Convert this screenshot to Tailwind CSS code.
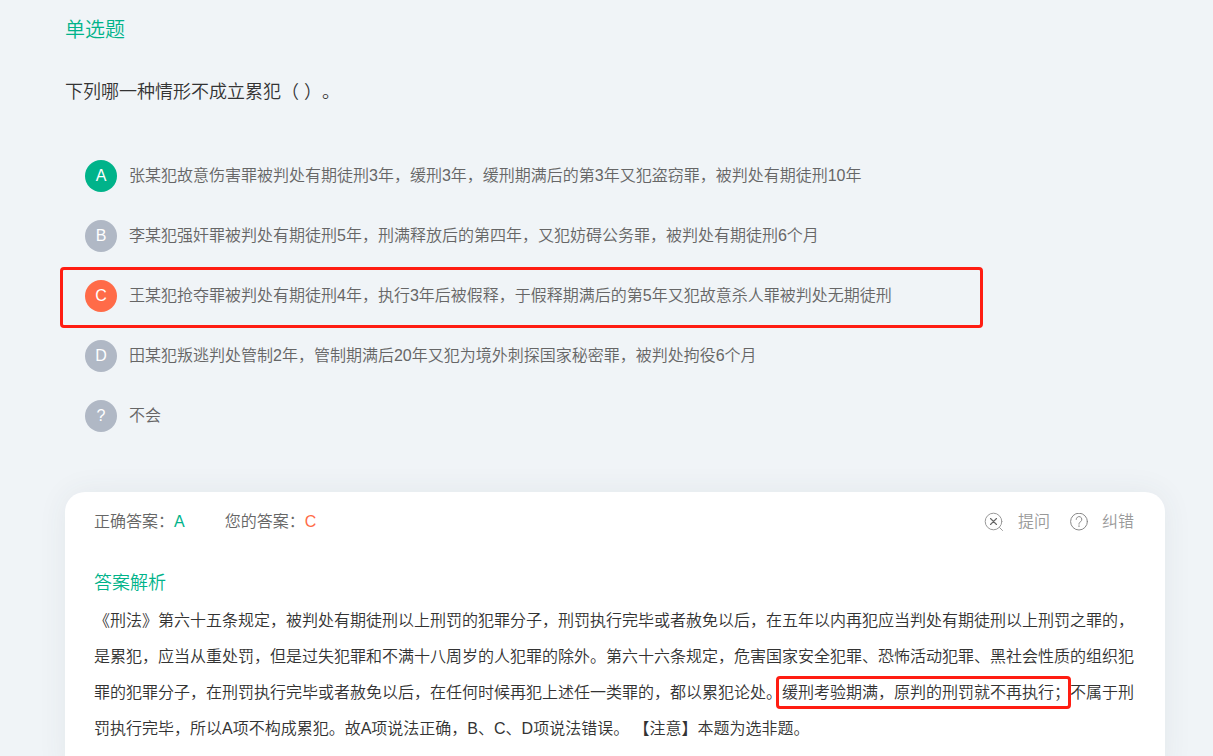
<!DOCTYPE html>
<html lang="zh-CN">
<head>
  <meta charset="UTF-8">
  <meta name="viewport" content="width=device-width, initial-scale=1.0">
  <title>单选题</title>
  <script src="https://cdn.jsdelivr.net/npm/@tailwindcss/browser@4"></script>
</head>
<body class="bg-[#f0f4f7] font-['Liberation_Sans','Noto_Sans_CJK_SC',sans-serif] font-[350] text-[#666] [text-spacing-trim:space-all] overflow-x-hidden">
  <main class="pl-[65px] pr-12 pt-3.5">
    <h1 class="text-xl leading-8 font-[350] text-[#00b38a]">单选题</h1>

    <form class="mt-8">
      <fieldset>
        <legend class="text-lg leading-7 text-[#333]">下列哪一种情形不成立累犯（ ）。</legend>

        <div class="mt-[54px] pl-5 flex flex-col gap-7 text-base">
          <label class="relative flex items-center gap-3 h-8">
            <input type="radio" name="answer" value="A" class="sr-only">
            <span class="size-8 shrink-0 rounded-full bg-[#00b38a] text-white flex items-center justify-center">A</span>
            <span>张某犯故意伤害罪被判处有期徒刑3年，缓刑3年，缓刑期满后的第3年又犯盗窃罪，被判处有期徒刑10年</span>
          </label>
          <label class="relative flex items-center gap-3 h-8">
            <input type="radio" name="answer" value="B" class="sr-only">
            <span class="size-8 shrink-0 rounded-full bg-[#b0b8c5] text-white flex items-center justify-center">B</span>
            <span>李某犯强奸罪被判处有期徒刑5年，刑满释放后的第四年，又犯妨碍公务罪，被判处有期徒刑6个月</span>
          </label>
          <label class="relative flex items-center gap-3 h-8">
            <input type="radio" name="answer" value="C" class="sr-only" checked>
            <span class="size-8 shrink-0 rounded-full bg-[#ff6b48] text-white flex items-center justify-center">C</span>
            <span>王某犯抢夺罪被判处有期徒刑4年，执行3年后被假释，于假释期满后的第5年又犯故意杀人罪被判处无期徒刑</span>
            <!-- marker -->
            <span class="absolute -left-[25px] -top-[13px] w-[923px] h-[61px] border-3 border-[#ff1d12] rounded-sm pointer-events-none"></span>
          </label>
          <label class="relative flex items-center gap-3 h-8">
            <input type="radio" name="answer" value="D" class="sr-only">
            <span class="size-8 shrink-0 rounded-full bg-[#b0b8c5] text-white flex items-center justify-center">D</span>
            <span>田某犯叛逃判处管制2年，管制期满后20年又犯为境外刺探国家秘密罪，被判处拘役6个月</span>
          </label>
          <label class="relative flex items-center gap-3 h-8">
            <input type="radio" name="answer" value="?" class="sr-only">
            <span class="size-8 shrink-0 rounded-full bg-[#b0b8c5] text-white flex items-center justify-center">?</span>
            <span>不会</span>
          </label>
        </div>
      </fieldset>
    </form>

    <section class="mt-[60px] px-[29px] pt-4 pb-8 bg-white rounded-[20px] shadow-[0_0_30px_rgba(60,70,80,0.07)]">
      <div class="flex items-center justify-between leading-7">
        <div class="flex gap-10">
          <p>正确答案：<span class="text-[#00b38a]">A</span></p>
          <p>您的答案：<span class="text-[#ff6b48]">C</span></p>
        </div>
        <div class="flex gap-5 pr-0.5 text-[#999]">
          <button type="button" class="flex items-center gap-3.5">
            <svg class="size-5" viewBox="0 0 20 20" fill="none" stroke="#999" stroke-linecap="round">
              <circle cx="9.5" cy="9.5" r="8.3"/>
              <path d="M15.5 15.5l3 3"/>
              <path d="M6.5 6.5l6 6M12.5 6.5l-6 6" stroke="#666" stroke-width="1.1"/>
            </svg>
            提问
          </button>
          <button type="button" class="flex items-center gap-3.5">
            <svg class="size-[18px]" viewBox="0 0 18 18" fill="none" stroke="#888" stroke-linecap="round">
              <circle cx="9" cy="8.6" r="8.4"/>
              <path d="M6.2 6.4a2.8 2.8 0 1 1 4.6 2.1C9.6 9.4 9 9.8 9 11.2"/>
              <path d="M9 13v.3" stroke-width="1.3"/>
            </svg>
            纠错
          </button>
        </div>
      </div>

      <h2 class="mt-[31px] text-lg leading-8 font-[350] text-[#00b38a]">答案解析</h2>
      <p class="mt-1 leading-9 text-[#333]">《刑法》第六十五条规定，被判处有期徒刑以上刑罚的犯罪分子，刑罚执行完毕或者赦免以后，在五年以内再犯应当判处有期徒刑以上刑罚之罪的，是累犯，应当从重处罚，但是过失犯罪和不满十八周岁的人犯罪的除外。第六十六条规定，危害国家安全犯罪、恐怖活动犯罪、黑社会性质的组织犯罪的犯罪分子，在刑罚执行完毕或者赦免以后，在任何时候再犯上述任一类罪的，都以累犯论处。<span class="relative">缓刑考验期满，原判的刑罚就不再执行；<span class="absolute -left-1.5 -right-px -top-2 -bottom-2 border-3 border-[#ff1d12] rounded-sm pointer-events-none"></span></span>不属于刑罚执行完毕，所以A项不构成累犯。故A项说法正确，B、C、D项说法错误。 【注意】本题为选非题。</p>
    </section>
  </main>
</body>
</html>
